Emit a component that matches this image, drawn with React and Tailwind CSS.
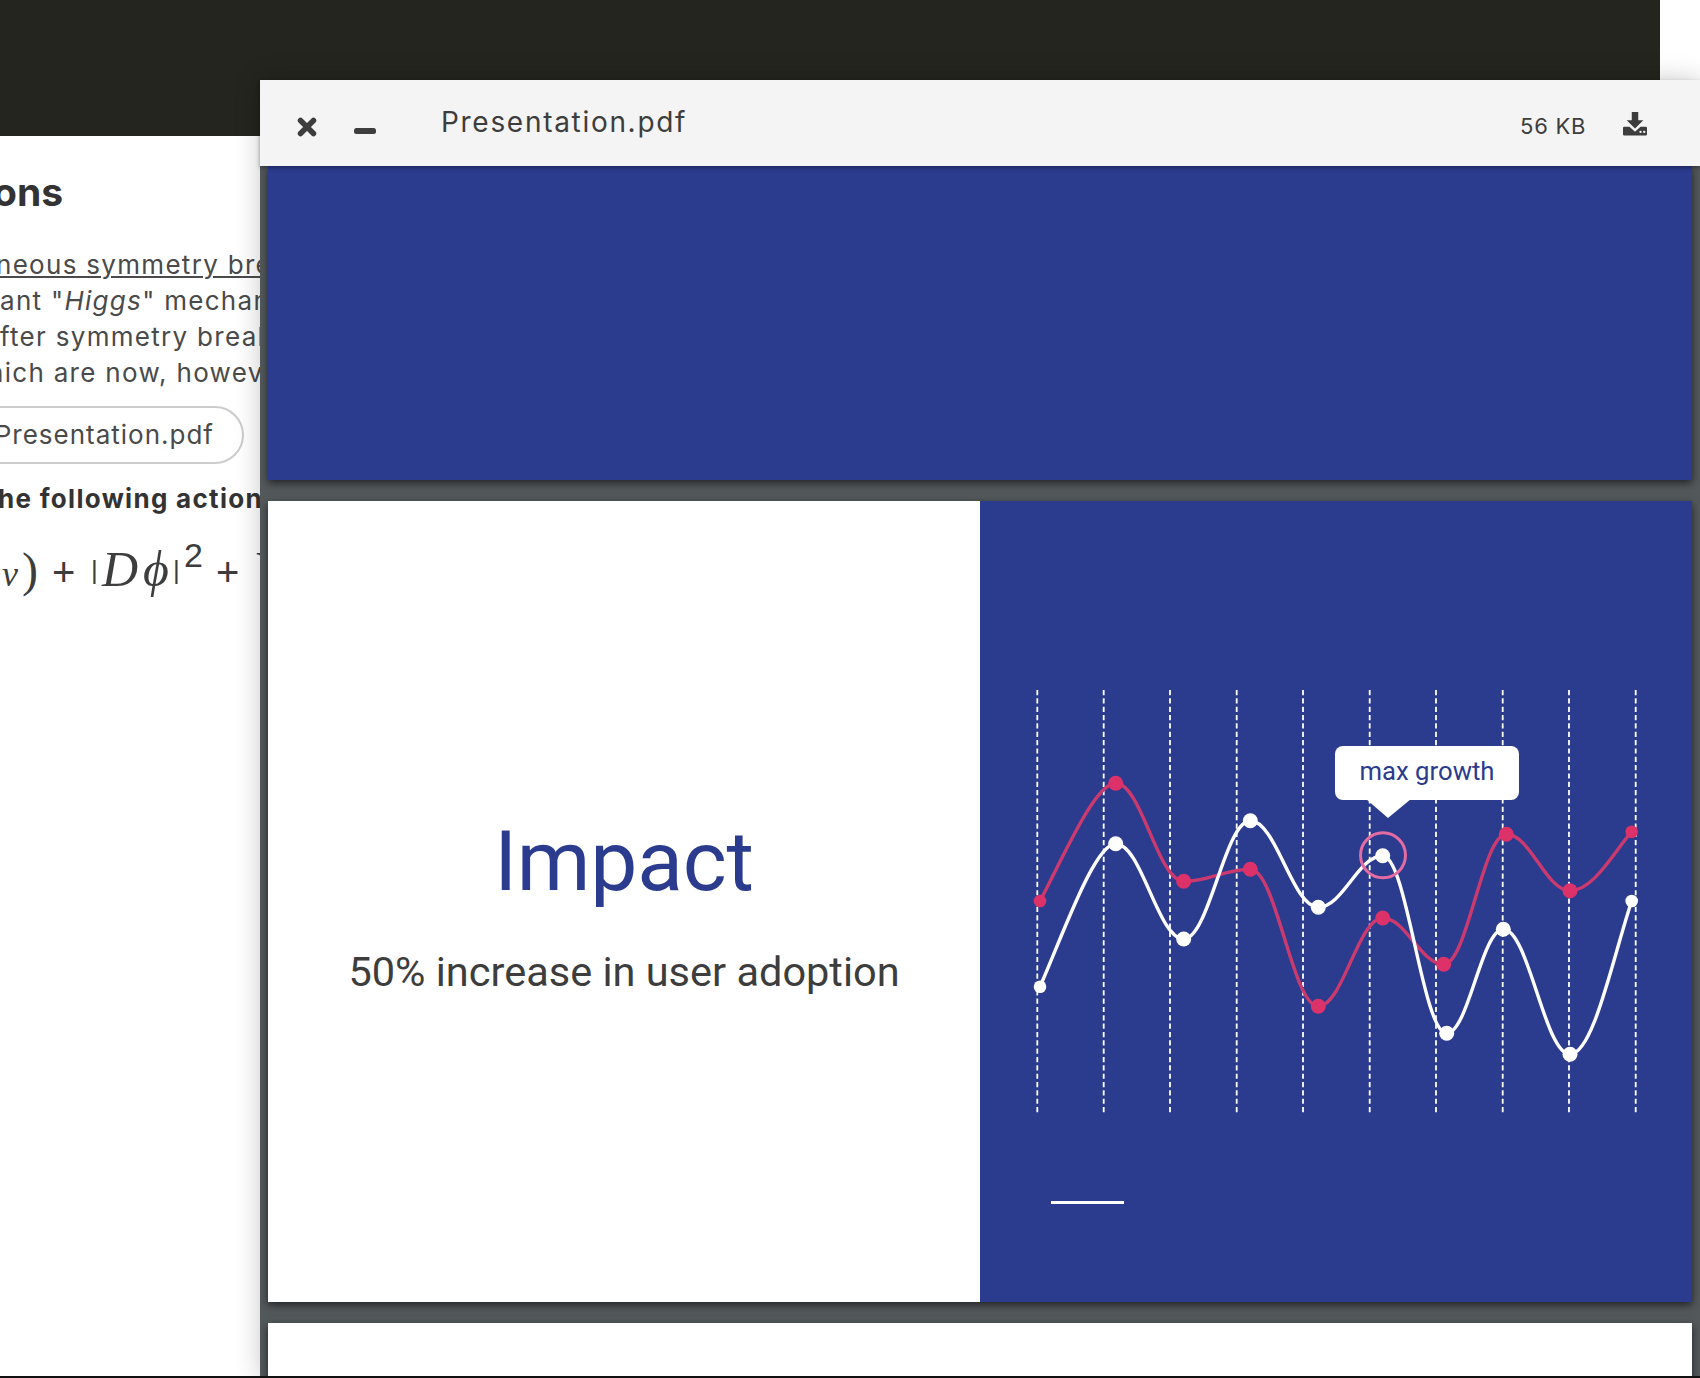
import React from "react";

const xs = [1037.3, 1103.7, 1170, 1236.7, 1303, 1369.7, 1436, 1502.7, 1569, 1635.7];
const red = [[1040,901],[1115.7,783.3],[1183.7,881.3],[1250.3,869.3],[1318.3,1006.3],[1382.7,918],[1443.7,964.3],[1506.3,834.3],[1570,890.7],[1631.7,831.7]];
const white = [[1040,986.7],[1115.7,843.7],[1183.7,939],[1250.3,820.7],[1318.3,907.3],[1382.7,855.7],[1446.7,1033.3],[1503.3,929.3],[1570,1054.3],[1631.7,901]];
const OX = 980, OY = 501;

function curve(pts) {
  let d = `M${pts[0][0]-OX} ${pts[0][1]-OY}`;
  const n = pts.length - 1;
  for (let i = 1; i <= n; i++) {
    const [a, b] = pts[i-1], [c, e] = pts[i];
    const w = c - a;
    const c1x = i === 1 ? a + w * 0.3 : a + w * 0.38;
    const c1y = i === 1 ? b + (e - b) * 0.36 : b;
    const c2x = i === n ? c - w * 0.3 : c - w * (i === 1 ? 0.28 : 0.38);
    const c2y = i === n ? e - (e - b) * 0.36 : e;
    d += ` C${c1x-OX} ${c1y-OY} ${c2x-OX} ${c2y-OY} ${c-OX} ${e-OY}`;
  }
  return d;
}

function Chart() {
  return (
    <svg width="712" height="801" viewBox="0 0 712 801" fill="none" className="block">
      {xs.map((x) => (
        <line key={x} x1={x-OX} x2={x-OX} y1={189} y2={612} stroke="#fff" strokeWidth="1.8" strokeDasharray="5.2 3.14" />
      ))}
      <path d={curve(red)} stroke="#cb3a6f" strokeWidth="3.4" />
      <path d={curve(white)} stroke="#fff" strokeWidth="3.4" />
      <circle cx={1383-OX} cy={855.3-OY} r="22.5" stroke="#e56ba3" strokeWidth="3" />
      {red.map(([x,y],i) => (
        <circle key={i} cx={x-OX} cy={y-OY} r={i===0||i===9?6.3:7.5} fill="#dc3269" />
      ))}
      {white.map(([x,y],i) => (
        <circle key={i} cx={x-OX} cy={y-OY} r={i===0||i===9?6.3:7.5} fill="#fff" />
      ))}
      <rect x={71} y={700} width={73} height={3} fill="#fff" />
    </svg>
  );
}

function Equation() {
  const sans = "font-['Liberation_Sans',sans-serif]";
  return (
    <div className="flex items-baseline whitespace-nowrap h-[60px] leading-[60px] text-[#3d3d3d] font-['Liberation_Serif',serif]">
      <span className="italic ml-[2px] w-[20px] text-[36px]">ν</span>
      <span className="w-[30px] text-[48px] font-light">)</span>
      <span className={`w-[39px] text-[40px] ${sans}`}>+</span>
      <span className={`w-[11px] text-[26px] -translate-y-[7px] ${sans}`}>|</span>
      <span className="italic w-[41px] text-[50px]">D</span>
      <span className="italic w-[30px] text-[50px]">ϕ</span>
      <span className={`w-[11px] text-[26px] -translate-y-[7px] ${sans}`}>|</span>
      <span className={`w-[32px] text-[34px] -translate-y-[19px] ${sans}`}>2</span>
      <span className={`w-[38px] text-[40px] ${sans}`}>+</span>
      <span className="italic text-[50px]">V</span>
    </div>
  );
}

export default function App() {
  const body = "font-['Inter',sans-serif] text-[26px] tracking-[1.3px] text-[#4a4a4a] whitespace-nowrap leading-[36px]";
  return (
    <div className="relative w-[1700px] h-[1378px] overflow-hidden bg-white">
      <div className="h-[136px] w-[1660px] bg-[#25251f]" />
      <div className="pt-[33px]">
        <h2 className="font-['Inter',sans-serif] font-bold text-[39px] leading-[46px] text-[#333] -ml-[7px] whitespace-nowrap">ons</h2>
        <div className="mt-[32px]">
          <p className={`${body} -ml-[4px] underline`}>neous symmetry breaking</p>
          <p className={body}>ant "<i>Higgs</i>" mechanism</p>
          <p className={body}>fter symmetry breaking</p>
          <p className={`${body} -ml-[12px]`}>hich are now, however</p>
        </div>
        <div className="mt-[15px] -ml-[40px] w-[284px] h-[58px] rounded-full border-2 border-[#cccccc] flex items-center justify-end pr-[28px]">
          <span className="font-['Inter',sans-serif] text-[26px] tracking-[1px] text-[#4a4a4a] whitespace-nowrap leading-[36px]">Presentation.pdf</span>
        </div>
        <p className={`${body} font-bold text-[#333] mt-[17px] -ml-[2px]`}>he following actions</p>
        <div className="mt-[22px]"><Equation /></div>
      </div>

      <div className="absolute left-[260px] top-[80px] w-[1440px] h-[1298px] flex flex-col shadow-[0_0_24px_rgba(0,0,0,0.22)]">
        <header className="h-[86px] shrink-0 bg-[#f4f4f4] flex items-center relative z-10 shadow-[0_2px_4px_rgba(0,0,0,0.35)] text-[#3d3d3d] font-['Inter',sans-serif]">
          <svg width="20" height="20" viewBox="0 0 20 20" className="ml-[37px] mt-[8px]"><path d="M3.5 3.5 16.5 16.5M16.5 3.5 3.5 16.5" stroke="#3d3d3d" strokeWidth="5.5" strokeLinecap="round" /></svg>
          <svg width="24" height="8" viewBox="0 0 24 8" className="ml-[36px] mt-[15px]"><rect x="1" y="1" width="22" height="6" rx="2.5" fill="#3d3d3d" /></svg>
          <span className="ml-[64px] text-[28px] tracking-[1.700px] -mt-[2px]">Presentation.pdf</span>
          <span className="ml-auto text-[22px] tracking-[0.7px] mt-[6px]">56 KB</span>
          <svg width="26" height="24" viewBox="0 0 28 26" className="ml-[36px] mr-[52px] mt-[2px]">
            <path d="M10.5 0h7v9h5.5L14 18 5 9h5.5z" fill="#3d3d3d" />
            <path d="M1 17.5c0-1 .7-1.5 1.5-1.5H8l6 5.5 6-5.500h5.500c.8 0 1.500.5 1.500 1.500V24c0 1-.7 1.500-1.500 1.500h-23c-.8 0-1.500-.5-1.500-1.500z" fill="#3d3d3d" />
            <circle cx="20" cy="21.500" r="1.300" fill="#f4f4f4" /><circle cx="24" cy="21.500" r="1.300" fill="#f4f4f4" />
          </svg>
        </header>
        <main className="flex-1 bg-[#53585b] pl-[8px] pr-[8px] overflow-hidden flex flex-col gap-[21px]">
          <section className="h-[314px] shrink-0 bg-[#2b3b8e] shadow-[0_3px_8px_rgba(0,0,0,0.6)]" />
          <section className="h-[801px] shrink-0 flex shadow-[0_3px_8px_rgba(0,0,0,0.6)]">
            <div className="w-[712px] bg-white flex flex-col items-center font-['Roboto',sans-serif]">
              <h1 className="mt-[313px] text-[84px] tracking-[-0.2px] leading-[96px] text-[#2b3b8e]">Impact</h1>
              <p className="mt-[38px] text-[41.5px] leading-[48px] text-[#3d3d3d]">50% increase in user adoption</p>
            </div>
            <div className="relative w-[712px] bg-[#2b3b8e]">
              <Chart />
              <div className="absolute left-[355px] top-[245px] w-[184px] h-[54px] pb-[3px] rounded-[8px] bg-white flex items-center justify-center font-['Roboto',sans-serif] text-[25.700px] text-[#2b3b8e]">
                max growth
                <span className="absolute left-[31px] top-[53px] w-0 h-0 border-l-[22px] border-r-[23px] border-t-[19px] border-l-transparent border-r-transparent border-t-white" />
              </div>
            </div>
          </section>
          <section className="flex-1 bg-white shadow-[0_3px_8px_rgba(0,0,0,0.6)]" />
        </main>
      </div>
      <div className="absolute left-0 bottom-0 w-full h-[2px] bg-[#111111]" />
    </div>
  );
}
